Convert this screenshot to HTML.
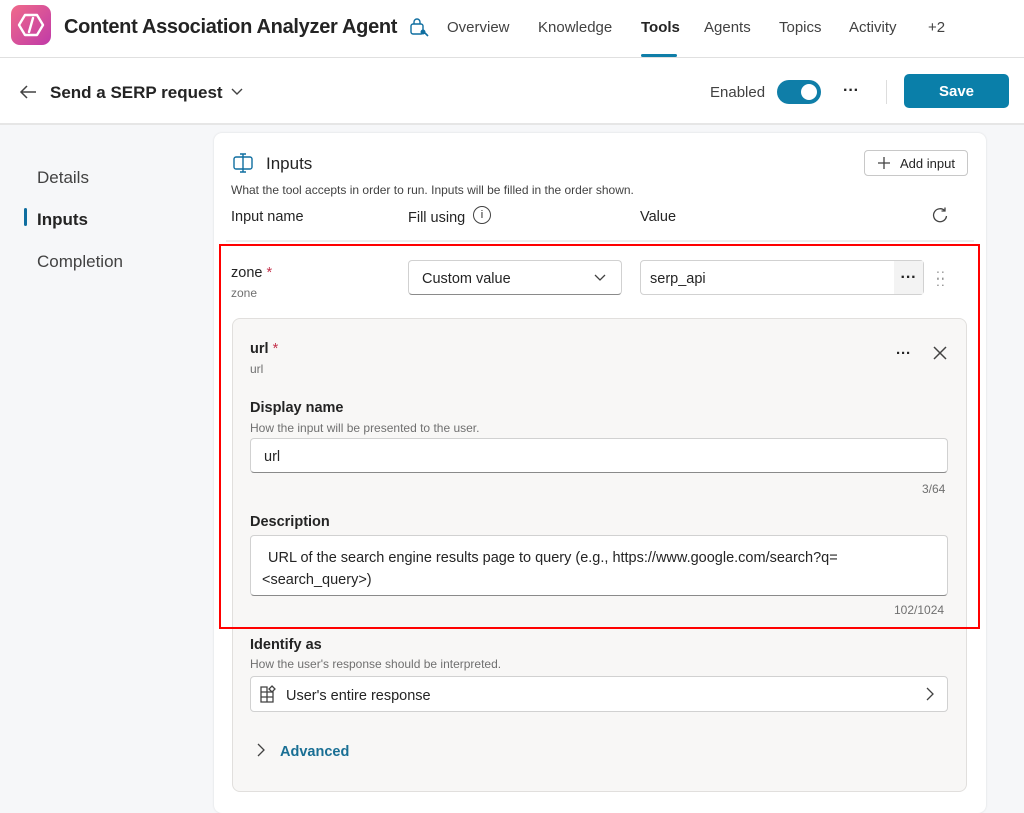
<!DOCTYPE html>
<html><head><meta charset="utf-8"><style>
*{margin:0;padding:0;box-sizing:border-box}
body{width:1024px;height:803px;overflow:hidden;font-family:"Liberation Sans",sans-serif;color:#242424;background:#f6f7f9;position:relative}
.a{position:absolute;white-space:nowrap}
.nav{font-size:15px;color:#424242;top:19px}
.lbl{font-size:14.5px;font-weight:bold;color:#242424}
.sub{font-size:12px;color:#707070}
.box{position:absolute;background:#fff;border:1px solid #d1d1d1;border-bottom:1px solid #8a8a8a;border-radius:4px}
</style></head><body>
<div class="a" style="left:0;top:0;width:1024px;height:58px;background:#fff;border-bottom:1px solid #e0e0e0"></div>
<div class="a" style="left:11px;top:5px;width:40px;height:40px;border-radius:9px;background:linear-gradient(135deg,#f06a8a,#c03aa8)">
<svg width="40" height="40" viewBox="0 0 40 40"><path d="M14 10 L8 20 L14 30 L26 30 L32 20 L26 10 Z" fill="none" stroke="#fff" stroke-width="2.4" stroke-linejoin="round"/><path d="M22 13 L18 27" stroke="#fff" stroke-width="2.4" stroke-linecap="round"/></svg></div>
<div class="a" style="left:64px;top:16px;font-size:20px;font-weight:bold;letter-spacing:-0.3px">Content Association Analyzer Agent</div>
<svg class="a" style="left:408px;top:16px" width="22" height="22" viewBox="0 0 22 22"><rect x="3" y="8" width="12" height="10" rx="2" fill="none" stroke="#0f6ea0" stroke-width="1.4"/><path d="M6 8V6a3 3 0 0 1 6 0v2" fill="none" stroke="#0f6ea0" stroke-width="1.4"/><circle cx="15" cy="16" r="2.5" fill="#0f6ea0"/><path d="M17 17l3 3" stroke="#0f6ea0" stroke-width="1.6"/></svg>
<div class="a nav" style="left:447px">Overview</div>
<div class="a nav" style="left:538px">Knowledge</div>
<div class="a nav" style="left:641px;font-weight:bold;color:#242424">Tools</div>
<div class="a" style="left:641px;top:54px;width:36px;height:3px;background:#0f7ea8;border-radius:2px"></div>
<div class="a nav" style="left:704px">Agents</div>
<div class="a nav" style="left:779px">Topics</div>
<div class="a nav" style="left:849px">Activity</div>
<div class="a nav" style="left:928px">+2</div>

<div class="a" style="left:0;top:58px;width:1024px;height:67px;background:#fff;border-bottom:2px solid #e6e6e6"></div>
<svg class="a" style="left:18px;top:83px" width="20" height="18" viewBox="0 0 20 18"><path d="M18 9H3M9 3L3 9l6 6" fill="none" stroke="#424242" stroke-width="1.5"/></svg>
<div class="a" style="left:50px;top:83px;font-size:17px;font-weight:bold">Send a SERP request</div>
<svg class="a" style="left:230px;top:87px" width="14" height="10" viewBox="0 0 14 10"><path d="M2 2l5 5 5-5" fill="none" stroke="#424242" stroke-width="1.4"/></svg>
<div class="a" style="left:710px;top:84px;font-size:15px;color:#424242">Enabled</div>
<div class="a" style="left:777px;top:80px;width:44px;height:24px;border-radius:12px;background:#0f7ea8"><div style="position:absolute;right:4px;top:4px;width:16px;height:16px;border-radius:8px;background:#fff"></div></div>
<div class="a" style="left:843px;top:82px;font-size:16px;font-weight:bold">···</div>
<div class="a" style="left:886px;top:80px;width:1px;height:24px;background:#ddd"></div>
<div class="a" style="left:904px;top:74px;width:105px;height:34px;border-radius:5px;background:#0a7fa9;color:#fff;font-size:15px;font-weight:bold;text-align:center;line-height:36px">Save</div>

<div class="a" style="left:37px;top:168px;font-size:17px;color:#424242">Details</div>
<div class="a" style="left:24px;top:208px;width:3px;height:18px;background:#0f6ea0;border-radius:2px"></div>
<div class="a" style="left:37px;top:210px;font-size:17px;font-weight:bold">Inputs</div>
<div class="a" style="left:37px;top:252px;font-size:17px;color:#424242">Completion</div>

<div class="a" style="left:214px;top:133px;width:772px;height:680px;background:#fff;border-radius:8px;box-shadow:0 0 2px rgba(0,0,0,.12)"></div>
<svg class="a" style="left:232px;top:152px" width="22" height="22" viewBox="0 0 22 22"><rect x="2" y="5" width="18" height="12" rx="2" fill="none" stroke="#0f6ea0" stroke-width="1.4"/><path d="M11 2v18M8 2h6M8 20h6" stroke="#0f6ea0" stroke-width="1.4" fill="none"/></svg>
<div class="a" style="left:266px;top:154px;font-size:17px">Inputs</div>
<div class="a" style="left:864px;top:150px;width:104px;height:26px;border:1px solid #c8c8c8;border-radius:4px;font-size:13px;line-height:26px;padding-left:35px">Add input</div>
<svg class="a" style="left:877px;top:156px" width="14" height="14" viewBox="0 0 14 14"><path d="M7 1v12M1 7h12" stroke="#424242" stroke-width="1.3"/></svg>
<div class="a" style="left:231px;top:183px;font-size:12px;color:#424242">What the tool accepts in order to run. Inputs will be filled in the order shown.</div>
<div class="a" style="left:231px;top:209px;font-size:14.5px">Input name</div>
<div class="a" style="left:408px;top:210px;font-size:14.5px">Fill using</div>
<div class="a" style="left:473px;top:206px;width:18px;height:18px;border:1px solid #424242;border-radius:50%;font-size:11px;text-align:center;line-height:16px">i</div>
<div class="a" style="left:640px;top:209px;font-size:14.5px">Value</div>
<svg class="a" style="left:931px;top:206px" width="18" height="18" viewBox="0 0 18 18"><path d="M14 5A6.5 6.5 0 1 0 15.5 10" fill="none" stroke="#424242" stroke-width="1.3"/><path d="M14 1.5V5h-3.5" fill="none" stroke="#424242" stroke-width="1.3"/></svg>
<div class="a" style="left:226px;top:240px;width:748px;height:2px;background:#eee"></div>

<div class="a" style="left:231px;top:265px;font-size:14.5px">zone <span style="color:#c4314b">*</span></div>
<div class="a sub" style="left:231px;top:286px">zone</div>
<div class="box" style="left:408px;top:260px;width:214px;height:35px"><span class="a" style="left:13px;top:10px;font-size:14.5px">Custom value</span><svg class="a" style="left:184px;top:12px" width="14" height="10" viewBox="0 0 14 10"><path d="M2 2l5 5 5-5" fill="none" stroke="#424242" stroke-width="1.3"/></svg></div>
<div class="box" style="left:640px;top:260px;width:284px;height:35px;border-bottom-color:#d1d1d1"><span class="a" style="left:9px;top:10px;font-size:14.5px">serp_api</span><div class="a" style="right:0;top:0;width:29px;height:33px;background:#f3f3f3;font-weight:bold;text-align:center;line-height:33px">···</div></div>
<div class="a" style="left:936px;top:271px;font-size:14px;color:#888;line-height:7px;letter-spacing:1px">::<br>::</div>

<div class="a" style="left:232px;top:318px;width:735px;height:474px;background:#f8f7f6;border:1px solid #e1dfdd;border-radius:8px"></div>
<div class="a" style="left:250px;top:341px;font-size:14.5px;font-weight:bold">url <span style="color:#c4314b;font-weight:normal">*</span></div>
<div class="a sub" style="left:250px;top:362px">url</div>
<div class="a" style="left:896px;top:345px;font-size:15px;font-weight:bold">···</div>
<svg class="a" style="left:932px;top:345px" width="16" height="16" viewBox="0 0 16 16"><path d="M2 2l12 12M14 2L2 14" stroke="#424242" stroke-width="1.5"/></svg>
<div class="a lbl" style="left:250px;top:400px">Display name</div>
<div class="a sub" style="left:250px;top:421px">How the input will be presented to the user.</div>
<div class="box" style="left:250px;top:438px;width:698px;height:35px"><span class="a" style="left:13px;top:10px;font-size:14.5px">url</span></div>
<div class="a sub" style="left:922px;top:482px">3/64</div>
<div class="a lbl" style="left:250px;top:514px">Description</div>
<div class="box" style="left:250px;top:535px;width:698px;height:61px"><span class="a" style="left:17px;top:11px;font-size:14.5px;line-height:22px">URL of the search engine results page to query (e.g., https://www.google.com/search?q=<br><span style="margin-left:-6px">&lt;search_query&gt;)</span></span></div>
<div class="a sub" style="left:894px;top:603px">102/1024</div>
<div class="a" style="left:219px;top:244px;width:761px;height:385px;border:2px solid #f00"></div>

<div class="a lbl" style="left:250px;top:637px">Identify as</div>
<div class="a sub" style="left:250px;top:657px">How the user's response should be interpreted.</div>
<div class="a" style="left:250px;top:676px;width:698px;height:36px;background:#fff;border:1px solid #d1d1d1;border-radius:4px"></div>
<svg class="a" style="left:258px;top:684px" width="20" height="20" viewBox="0 0 20 20"><path d="M3 8h12v10H3zM9 8v10M3 13h12M3 3h6v5H3z" fill="none" stroke="#424242" stroke-width="1.3"/><path d="M14 2l3 3-3 3-3-3z" fill="none" stroke="#424242" stroke-width="1.3"/></svg>
<div class="a" style="left:286px;top:688px;font-size:14.5px">User's entire response</div>
<svg class="a" style="left:924px;top:686px" width="12" height="16" viewBox="0 0 12 16"><path d="M3 2l6 6-6 6" fill="none" stroke="#424242" stroke-width="1.3"/></svg>
<svg class="a" style="left:255px;top:742px" width="12" height="16" viewBox="0 0 12 16"><path d="M3 2l6 6-6 6" fill="none" stroke="#424242" stroke-width="1.3"/></svg>
<div class="a" style="left:280px;top:744px;font-size:14.5px;font-weight:bold;color:#1a6f94">Advanced</div>
</body></html>
